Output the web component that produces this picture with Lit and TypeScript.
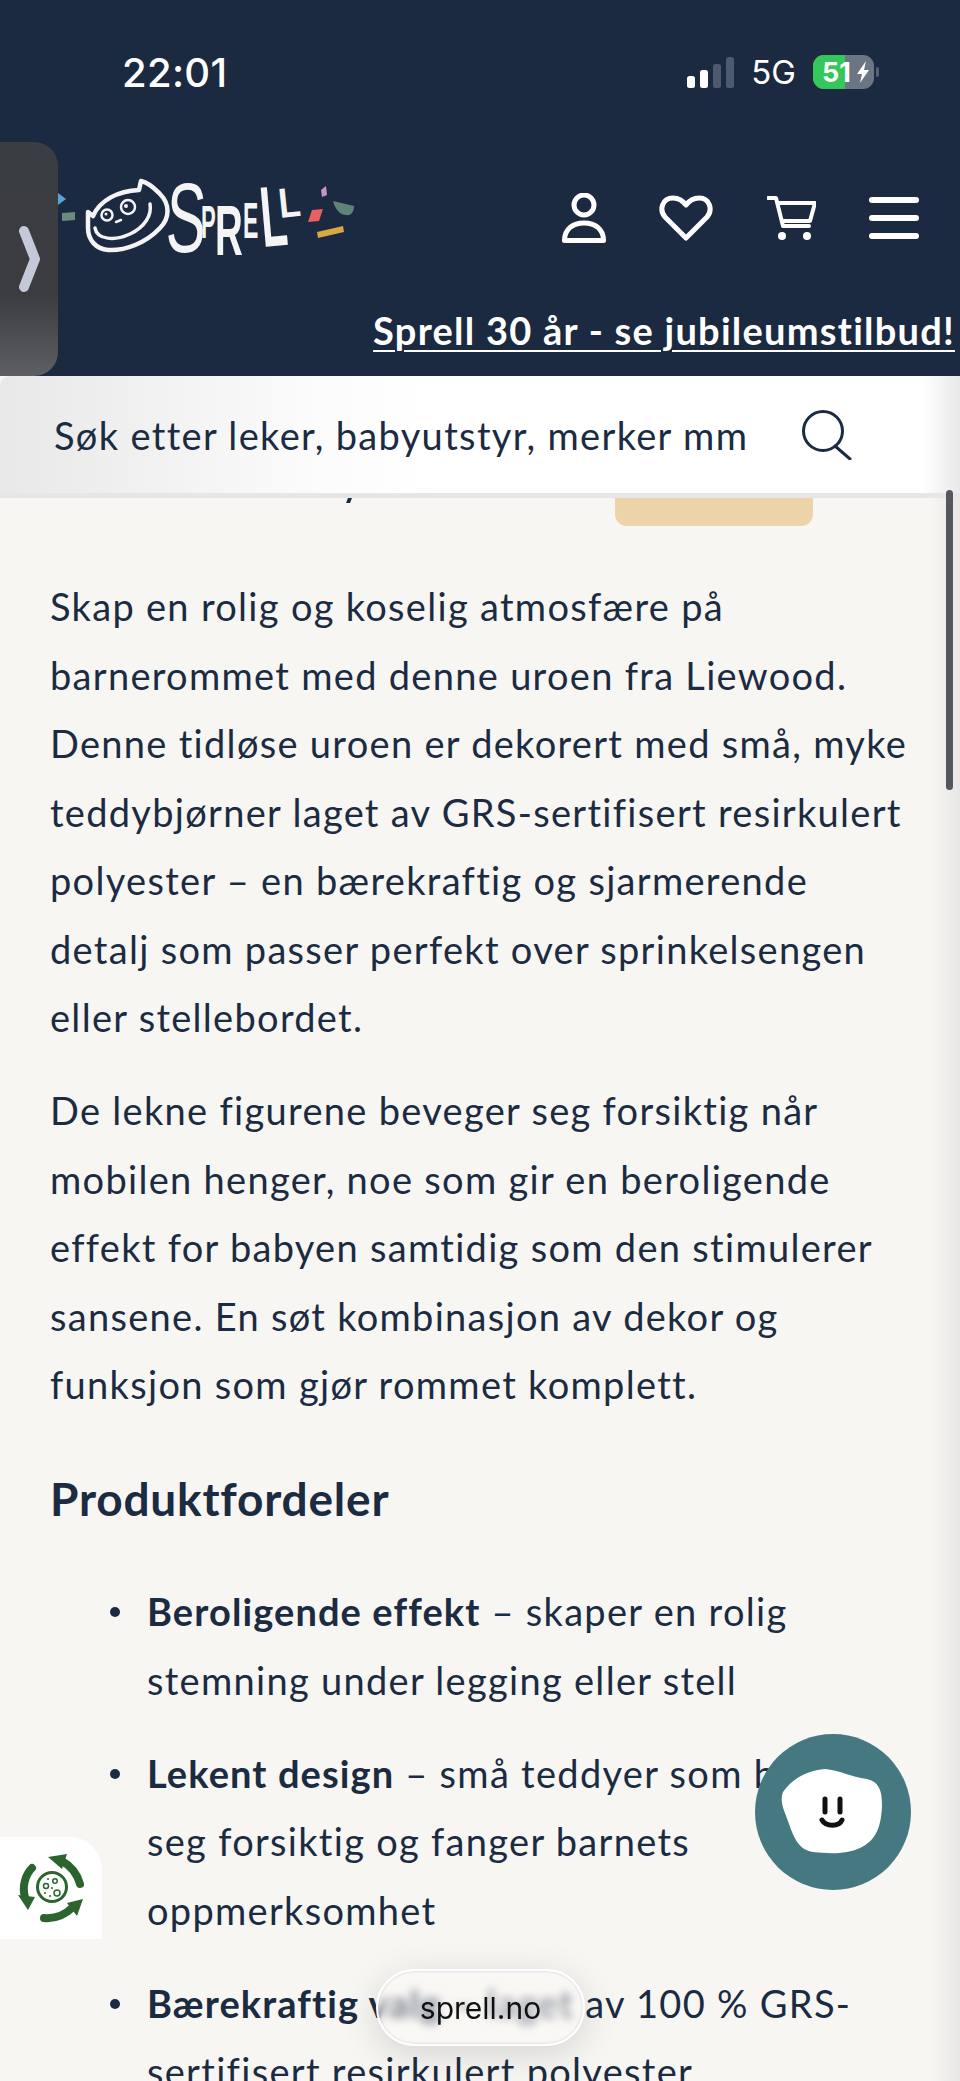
import { LitElement, html, css } from "lit";
import { customElement } from "lit/decorators.js";

@customElement("app-root")
export class AppRoot extends LitElement {
  static styles = css`
    :host {
      display: block;
      position: relative;
      width: 960px;
      height: 2081px;
      overflow: hidden;
      background: #f8f6f3;
      color: #1b2b42;
      font-family: Lato, "Open Sans", sans-serif;
    }
    .header {
      background: #1b2a41;
      color: #fff;
    }
    .status {
      height: 144px;
      display: flex;
      align-items: center;
      padding: 0 81px 0 122px;
      box-sizing: border-box;
    }
    .time {
      font-family: Inter, sans-serif;
      font-size: 40px;
      font-weight: 500;
      letter-spacing: 0.3px;
    }
    .status-right {
      margin-left: auto;
      display: flex;
      align-items: center;
      gap: 17px;
    }
    .net {
      font-family: Inter, sans-serif;
      font-size: 33px;
      font-weight: 400;
    }
    .nav {
      height: 148px;
      display: flex;
      align-items: center;
      padding-right: 41px;
    }
    .logo {
      display: block;
      width: 370px;
      height: 100px;
    }
    .nav-icons {
      margin-left: auto;
      display: flex;
      align-items: center;
      gap: 53.5px;
    }
    .nav-icons svg {
      display: block;
    }
    .promo {
      height: 84px;
      box-sizing: border-box;
      padding: 0 5px 8px 0;
      display: flex;
      align-items: center;
      justify-content: flex-end;
    }
    .promo a {
      color: #fff;
      font-size: 38px;
      font-weight: 700;
      letter-spacing: 1.25px;
      text-decoration: underline;
      text-decoration-thickness: 2px;
      text-underline-offset: 5px;
      white-space: nowrap;
    }
    .search {
      height: 122px;
      box-sizing: border-box;
      border-bottom: 5px solid #e6e6e9;
      border-radius: 10px 0 0 0;
      display: flex;
      align-items: center;
      padding-left: 54px;
      gap: 54px;
      background: linear-gradient(90deg, #e8e8e8 0, #fbfbfb 32%, #fff 45%, #fff 96%, #e9e9e9 100%);
      font-size: 38px;
    }
    .search span {
      white-space: nowrap;
      letter-spacing: 1.34px;
    }
    .stub {
      height: 28px;
      position: relative;
    }
    .stub .btn {
      width: 198px;
      height: 28px;
      margin-left: 615px;
      background: #ecd4a8;
      border-radius: 0 0 12px 12px;
    }
    .stub .tail {
      position: absolute;
      left: 347px;
      top: 0;
      width: 4px;
      height: 5px;
      background: #1b2b42;
      transform: skewX(-20deg);
    }
    .body {
      padding: 46px 0 0 50px;
      font-size: 38px;
      line-height: 68.5px;
      letter-spacing: 1.3px;
      white-space: nowrap;
    }
    p {
      margin: 0 0 24.5px;
    }
    h2 {
      margin: 46px 0 44px;
      font-size: 46px;
      line-height: 68.5px;
      font-weight: 700;
      letter-spacing: 0.8px;
    }
    ul {
      margin: 0;
      padding: 0 0 0 97px;
      list-style: none;
    }
    li {
      position: relative;
      margin: 0 0 24.5px;
    }
    li::before {
      content: "";
      position: absolute;
      left: -37px;
      top: 30px;
      width: 10px;
      height: 10px;
      border-radius: 50%;
      background: #1b2b42;
    }
    b {
      font-weight: 700;
      letter-spacing: 1.1px;
    }
    .edge {
      position: absolute;
      right: 0;
      top: 498px;
      bottom: 0;
      width: 30px;
      background: linear-gradient(90deg, rgba(200, 200, 200, 0), rgba(190, 190, 190, 0.28));
      pointer-events: none;
    }
    .scrollbar {
      position: absolute;
      left: 946px;
      top: 490px;
      width: 7px;
      height: 300px;
      border-radius: 4px;
      background: #54585e;
    }
    .side-tab {
      position: absolute;
      left: 0;
      top: 142px;
      width: 58px;
      height: 234px;
      border-radius: 0 24px 24px 0;
      background: linear-gradient(180deg, #3a3d42 0, #3a3c40 65%, #5d5f62 100%);
      display: flex;
      align-items: center;
      justify-content: center;
    }
    .chat {
      position: absolute;
      left: 755px;
      top: 1734px;
      width: 156px;
      height: 156px;
      border-radius: 50%;
      background: #467882;
    }
    .chat svg {
      display: block;
    }
    .recycle {
      position: absolute;
      left: 0;
      top: 1837px;
      width: 102px;
      height: 102px;
      background: #fff;
      border-radius: 0 32px 0 0;
    }
    .recycle svg {
      display: block;
    }
    .pill {
      position: absolute;
      left: 376px;
      top: 1969px;
      width: 209px;
      height: 77px;
      box-sizing: border-box;
      border-radius: 39px;
      border: 2.5px solid #fff;
      background: rgba(252, 251, 249, 0.42);
      backdrop-filter: blur(4px);
      box-shadow: 0 8px 34px rgba(60, 60, 60, 0.18), inset 0 0 3px rgba(120, 140, 170, 0.4);
      display: flex;
      align-items: center;
      justify-content: center;
      font-family: Inter, sans-serif;
      font-size: 30px;
      color: #111;
    }
  `;

  render() {
    return html`
      <div class="header">
        <div class="status">
          <span class="time">22:01</span>
          <div class="status-right">
            <svg width="47" height="31" viewBox="0 0 47 31">
              <rect x="0" y="19" width="8" height="12" rx="2.5" fill="#fff" />
              <rect x="13" y="13" width="8" height="18" rx="2.5" fill="#fff" />
              <rect x="26" y="7" width="8" height="24" rx="2.5" fill="#4d5a6d" />
              <rect x="39" y="0" width="8" height="31" rx="2.5" fill="#4d5a6d" />
            </svg>
            <span class="net">5G</span>
            <svg width="66" height="34" viewBox="0 0 66 34">
              <rect x="0" y="0" width="61" height="34" rx="11" fill="#6c7583" />
              <path d="M11 0H32V34H11A11 11 0 0 1 0 23V11A11 11 0 0 1 11 0Z" fill="#34c759" />
              <text x="9" y="27" font-family="Inter, sans-serif" font-size="27" font-weight="700" fill="#fff">51</text>
              <path d="M53 6L44 19H49L47 28L56 15H51Z" fill="#fff" />
              <path d="M63 12A5 5 0 0 1 63 22Z" fill="#56606f" />
            </svg>
          </div>
        </div>
        <div class="nav">
          <svg class="logo" viewBox="0 168 370 100">
            <path d="M58 193L66 199L58 205Z" fill="#5aa5cf" />
            <path d="M62 213L75 212L75 220L62 221Z" fill="#6b8a80" />
            <g fill="none" stroke="#f4f4f4" stroke-linecap="round" stroke-linejoin="round">
              <path stroke-width="4.5" d="M88 212L93 216C100 200 118 191 139 190L141 181C150 183 156 190 160 194C170 204 170 218 160 228C146 243 125 251 108 250C96 249 88 240 88 228Z" />
              <path stroke-width="3.5" d="M95 228C97 240 115 241 130 234C145 227 152 215 150 204" />
              <circle cx="107" cy="215" r="5.5" stroke-width="2.5" />
              <circle cx="128" cy="207" r="7" stroke-width="2.5" />
              <path stroke-width="2.5" d="M116 222L121 220" />
            </g>
            <circle cx="106" cy="214" r="1.5" fill="#f4f4f4" />
            <circle cx="126" cy="206" r="2" fill="#f4f4f4" />
            <g font-family="Liberation Sans, sans-serif" fill="#f4f4f4">
              <text transform="translate(165 252) scale(0.6 1) skewX(-4)" font-size="99">S</text>
              <text transform="translate(201 238) scale(0.48 1)" font-size="46" font-weight="700">P</text>
              <text transform="translate(215 255) scale(0.55 1)" font-size="70" font-weight="700">R</text>
              <text transform="translate(243 238) scale(0.46 1)" font-size="50" font-weight="700">E</text>
              <text transform="translate(263 247) rotate(-5) scale(0.5 1)" font-size="86" font-weight="700">L</text>
              <text transform="translate(280 218) rotate(-6) scale(0.85 1)" font-size="42" font-weight="700">L</text>
            </g>
            <path d="M321 190L326 186L327 195L322 197Z" fill="#c895c8" />
            <path d="M333 201L354 206C354 212 351 216 346 215C340 215 335 209 333 201Z" fill="#5e8478" />
            <path d="M312 210L323 209L319 221L308 222Z" fill="#e8605f" />
            <path d="M317 232L343 226L344 232L318 238Z" fill="#d9a843" />
          </svg>
          <div class="nav-icons">
            <svg width="44" height="50" viewBox="0 0 44 50" fill="none" stroke="#fff" stroke-width="5" stroke-linejoin="round">
              <circle cx="22" cy="12" r="10" />
              <path d="M2.5 47.5C2.5 36 11 30 22 30C33 30 41.5 36 41.5 47.5Z" />
            </svg>
            <svg width="54" height="46" viewBox="0 0 54 46" fill="none" stroke="#fff" stroke-width="5" stroke-linejoin="round">
              <path d="M27 43L6 22C0 15 3 3 14 3C20 3 24 6 27 10C30 6 34 3 40 3C51 3 54 15 48 22Z" />
            </svg>
            <svg width="49" height="45" viewBox="0 0 49 45" fill="none" stroke="#fff" stroke-width="4" stroke-linecap="round" stroke-linejoin="round">
              <path d="M1 2H9L16 30H42" />
              <path d="M11 7H48L43 25H15.5" />
              <circle cx="15" cy="40" r="4" fill="#fff" stroke="none" />
              <circle cx="40" cy="40" r="4" fill="#fff" stroke="none" />
            </svg>
            <svg width="50" height="42" viewBox="0 0 50 42" fill="#fff">
              <rect x="0" y="0" width="50" height="6" rx="3" />
              <rect x="0" y="18" width="50" height="6" rx="3" />
              <rect x="0" y="36" width="50" height="6" rx="3" />
            </svg>
          </div>
        </div>
        <div class="promo"><a>Sprell 30 år - se jubileumstilbud!</a></div>
      </div>

      <div class="search">
        <span>Søk etter leker, babyutstyr, merker mm</span>
        <svg width="50" height="50" viewBox="0 0 50 50" fill="none" stroke="#1b2b42" stroke-width="3">
          <circle cx="21" cy="21" r="19.5" />
          <path d="M33 36L48 49" stroke-linecap="round" />
        </svg>
      </div>
      <div class="stub"><div class="tail"></div><div class="btn"></div></div>

      <div class="body">
        <p>
          Skap en rolig og koselig atmosfære på<br />
          barnerommet med denne uroen fra Liewood.<br />
          Denne tidløse uroen er dekorert med små, myke<br />
          teddybjørner laget av GRS-sertifisert resirkulert<br />
          polyester – en bærekraftig og sjarmerende<br />
          detalj som passer perfekt over sprinkelsengen<br />
          eller stellebordet.
        </p>
        <p>
          De lekne figurene beveger seg forsiktig når<br />
          mobilen henger, noe som gir en beroligende<br />
          effekt for babyen samtidig som den stimulerer<br />
          sansene. En søt kombinasjon av dekor og<br />
          funksjon som gjør rommet komplett.
        </p>
        <h2>Produktfordeler</h2>
        <ul>
          <li><b>Beroligende effekt</b> – skaper en rolig<br />stemning under legging eller stell</li>
          <li><b>Lekent design</b> – små teddyer som beveger<br />seg forsiktig og fanger barnets<br />oppmerksomhet</li>
          <li><b>Bærekraftig valg</b> – laget av 100 % GRS-<br />sertifisert resirkulert polyester</li>
        </ul>
      </div>

      <div class="edge"></div>
      <div class="scrollbar"></div>
      <div class="side-tab">
        <svg width="22" height="68" viewBox="0 0 22 68" fill="none" stroke="#c5c8d8" stroke-width="10" stroke-linecap="round" stroke-linejoin="round">
          <path d="M6 6L17 34L6 62" />
        </svg>
      </div>
      <div class="recycle">
        <svg width="102" height="102" viewBox="0 0 102 102">
          <g fill="none" stroke="#2c6430" stroke-width="8" stroke-linecap="round">
            <path d="M32 31C25 38 22 50 25 60" />
            <path d="M80 47C77 36 71 29 62 24" />
            <path d="M44 81C55 82 65 78 73 70" />
          </g>
          <g fill="#2c6430">
            <path d="M18 58L35 60L28 73Z" />
            <path d="M48 20L67 17L62 32Z" />
            <path d="M67 66L83 62L77 79Z" />
          </g>
          <circle cx="52" cy="50" r="14.5" fill="none" stroke="#2c6430" stroke-width="3" />
          <circle cx="46" cy="49" r="2.5" fill="none" stroke="#2c6430" stroke-width="1.5" />
          <circle cx="55" cy="44" r="2.3" fill="none" stroke="#2c6430" stroke-width="1.5" />
          <circle cx="57" cy="56" r="3" fill="none" stroke="#2c6430" stroke-width="1.5" />
          <circle cx="48" cy="42" r="1" fill="#2c6430" />
          <circle cx="52" cy="51" r="1" fill="#2c6430" />
          <circle cx="50" cy="59" r="1" fill="#2c6430" />
          <circle cx="45" cy="56" r="1" fill="#2c6430" />
        </svg>
      </div>
      <div class="chat">
        <svg width="156" height="156" viewBox="0 0 156 156">
          <path d="M28 58C36 46 52 36 70 35C84 36 96 43 112 45C125 48 127 58 127 72C126 92 122 106 105 114C92 120 76 120 58 118C44 116 39 104 34 90C30 78 24 68 28 58Z" fill="#fff" />
          <g fill="none" stroke="#111" stroke-linecap="round" stroke-width="5">
            <path d="M70 65V78M85 65V78" />
            <path d="M67 86C71 93 84 93 87 86" />
          </g>
        </svg>
      </div>
      <div class="pill">sprell.no</div>
    `;
  }
}
